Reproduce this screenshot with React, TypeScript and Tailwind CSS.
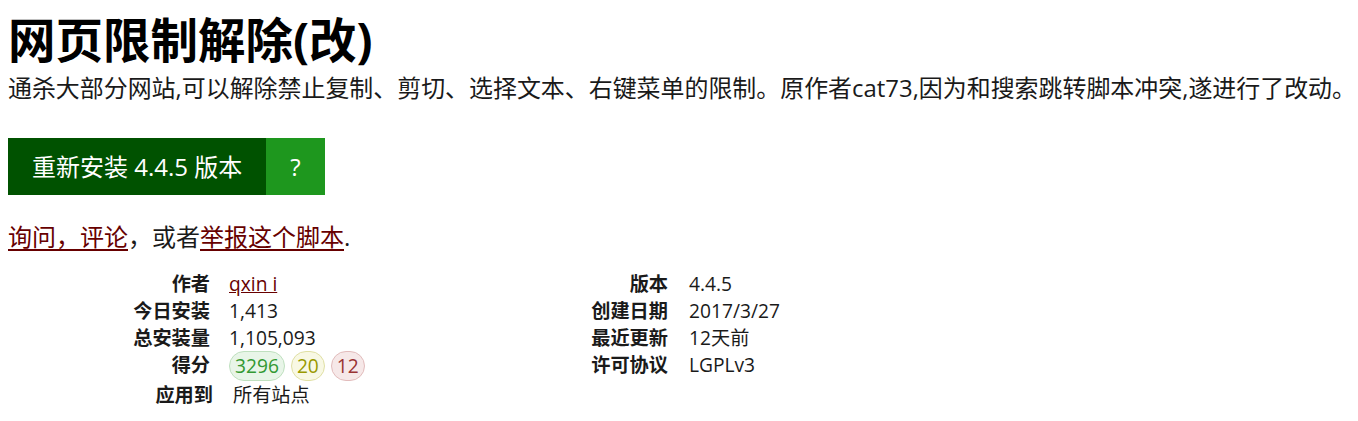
const font = { fontFamily: '"Open Sans", "Noto Sans CJK SC", sans-serif' };

const stats: [string, React.ReactNode, string, string][] = [
  ["作者", <a href="#" className="text-[#670000] underline">qxin i</a>, "版本", "4.4.5"],
  ["今日安装", "1,413", "创建日期", "2017/3/27"],
  ["总安装量", "1,105,093", "最近更新", "12天前"],
  [
    "得分",
    <span className="flex gap-[6px]">
      <span className="rounded-full border border-[#bfe0bf] bg-[#e8f5e8] px-[5px] leading-[28px] text-[#339933]">3296</span>
      <span className="rounded-full border border-[#e0e0a4] bg-[#f8f8e4] px-[5px] leading-[28px] text-[#999900]">20</span>
      <span className="rounded-full border border-[#e2bcbc] bg-[#f6e8e8] px-[5px] leading-[28px] text-[#993333]">12</span>
    </span>,
    "许可协议",
    "LGPLv3",
  ],
];

export default function App() {
  return (
    <div className="min-h-[421px] bg-white px-2 text-[#1a1a1a]" style={font}>
      <h2 className="mt-[11px] text-[47.5px] font-bold leading-[58px] text-black">网页限制解除(改)</h2>
      <p className="mt-px whitespace-nowrap text-[23.95px] leading-[36px]">
        通杀大部分网站,可以解除禁止复制、剪切、选择文本、右键菜单的限制。原作者cat73,因为和搜索跳转脚本冲突,遂进行了改动。
      </p>

      <div className="mt-8 flex text-[24px] leading-[33px] text-white">
        <a href="#" className="bg-[#005200] px-6 py-3">重新安装 4.4.5 版本</a>
        <a href="#" className="bg-[#1e971e] px-[24px] py-3">?</a>
      </div>

      <p className="mt-6 text-[24px] leading-[36px]">
        <a href="#" className="text-[#670000] underline decoration-2 underline-offset-[3px]">询问，评论</a>，或者
        <a href="#" className="text-[#670000] underline decoration-2 underline-offset-[3px]">举报这个脚本</a>.
      </p>

      <dl className="mt-[15px] grid grid-cols-[202px_256px_202px_1fr] text-[19.2px] leading-[27px]">
        {stats.map(([k1, v1, k2, v2]) => (
          <div key={k1} className="contents">
            <dt className="text-right font-bold">{k1}</dt>
            <dd className="pl-[19px]">{v1}</dd>
            <dt className="text-right font-bold">{k2}</dt>
            <dd className="pl-[21px]">{v2}</dd>
          </div>
        ))}
      </dl>
      <dl className="flex text-[19.2px] leading-[27px]">
        <dt className="w-[205px] text-right font-bold">应用到</dt>
        <dd className="pl-5">所有站点</dd>
      </dl>
    </div>
  );
}
